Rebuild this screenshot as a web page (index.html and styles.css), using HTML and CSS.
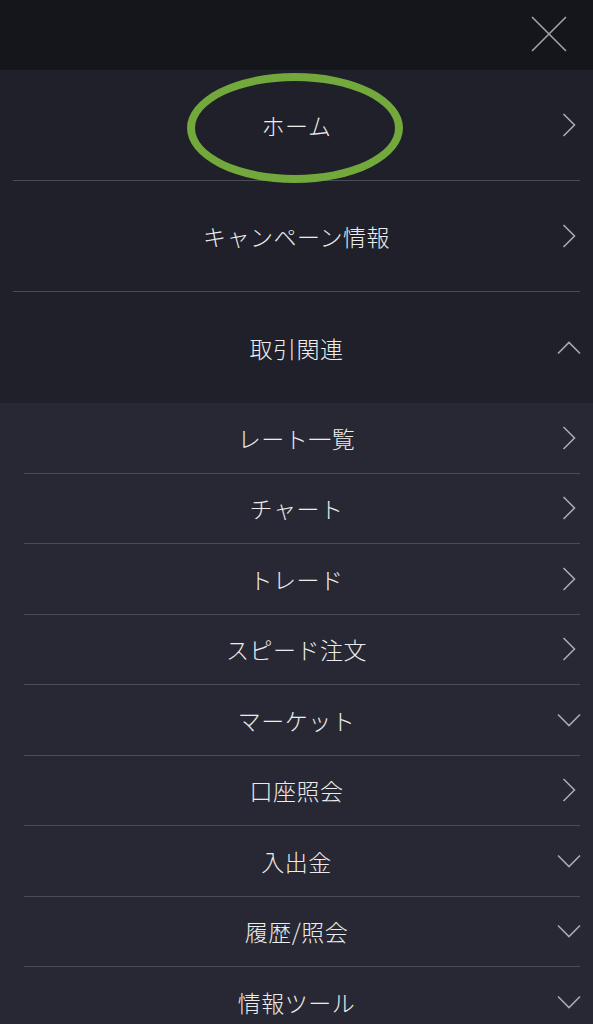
FILE: index.html
```html
<!DOCTYPE html>
<html lang="ja">
<head>
  <meta charset="UTF-8" />
  <meta name="viewport" content="width=device-width, initial-scale=1.0" />
  <title>メニュー</title>
  <link rel="stylesheet" href="styles.css">
</head>
<body>

  <!-- ヘッダー -->
  <header class="menu-header">
    <button class="close-btn" aria-label="閉じる">
      <svg width="36" height="36" viewBox="0 0 36 36"><path d="M1 1 L35 35 M35 1 L1 35" stroke="#a2a3a8" stroke-width="1.6" fill="none"/></svg>
    </button>
  </header>

  <!-- メインメニュー -->
  <nav class="main-menu">
    <a class="main-row" href="#">
      <span class="label">ホーム</span>
      <span class="icon"><svg width="14" height="24" viewBox="0 0 14 24"><path d="M1.5 1 L12.5 12 L1.5 23" class="chev"/></svg></span>
      <span class="mark"></span>
    </a>
    <hr class="line main-line">
    <a class="main-row" href="#">
      <span class="label">キャンペーン情報</span>
      <span class="icon"><svg width="14" height="24" viewBox="0 0 14 24"><path d="M1.5 1 L12.5 12 L1.5 23" class="chev"/></svg></span>
    </a>
    <hr class="line main-line">
    <a class="main-row tall" href="#">
      <span class="label">取引関連</span>
      <span class="icon"><svg width="24" height="14" viewBox="0 0 24 14"><path d="M1 12.5 L12 1.5 L23 12.5" class="chev"/></svg></span>
    </a>
  </nav>

  <!-- サブメニュー -->
  <nav class="sub-menu">
    <a class="sub-row" href="#"><span class="label">レート一覧</span><span class="icon"><svg width="14" height="24" viewBox="0 0 14 24"><path d="M1.5 1 L12.5 12 L1.5 23" class="chev"/></svg></span></a>
    <hr class="line sub-line">
    <a class="sub-row" href="#"><span class="label">チャート</span><span class="icon"><svg width="14" height="24" viewBox="0 0 14 24"><path d="M1.5 1 L12.5 12 L1.5 23" class="chev"/></svg></span></a>
    <hr class="line sub-line">
    <a class="sub-row" href="#"><span class="label">トレード</span><span class="icon"><svg width="14" height="24" viewBox="0 0 14 24"><path d="M1.5 1 L12.5 12 L1.5 23" class="chev"/></svg></span></a>
    <hr class="line sub-line">
    <a class="sub-row" href="#"><span class="label">スピード注文</span><span class="icon"><svg width="14" height="24" viewBox="0 0 14 24"><path d="M1.5 1 L12.5 12 L1.5 23" class="chev"/></svg></span></a>
    <hr class="line sub-line">
    <a class="sub-row" href="#"><span class="label">マーケット</span><span class="icon"><svg width="24" height="14" viewBox="0 0 24 14"><path d="M1 1.5 L12 12.5 L23 1.5" class="chev"/></svg></span></a>
    <hr class="line sub-line">
    <a class="sub-row" href="#"><span class="label">口座照会</span><span class="icon"><svg width="14" height="24" viewBox="0 0 14 24"><path d="M1.5 1 L12.5 12 L1.5 23" class="chev"/></svg></span></a>
    <hr class="line sub-line">
    <a class="sub-row" href="#"><span class="label">入出金</span><span class="icon"><svg width="24" height="14" viewBox="0 0 24 14"><path d="M1 1.5 L12 12.5 L23 1.5" class="chev"/></svg></span></a>
    <hr class="line sub-line">
    <a class="sub-row" href="#"><span class="label">履歴/照会</span><span class="icon"><svg width="24" height="14" viewBox="0 0 24 14"><path d="M1 1.5 L12 12.5 L23 1.5" class="chev"/></svg></span></a>
    <hr class="line sub-line">
    <a class="sub-row" href="#"><span class="label">情報ツール</span><span class="icon"><svg width="24" height="14" viewBox="0 0 24 14"><path d="M1 1.5 L12 12.5 L23 1.5" class="chev"/></svg></span></a>
  </nav>

</body>
</html>
```

FILE: styles.css
```css
body {
  margin: 0;
  font-family: 'Noto Sans CJK JP', 'Noto Sans', sans-serif;
  background-color: #272833;
  color: #ececec;
  overflow: hidden;
}
.menu-header {
  height: 70px;
  background-color: #15161b;
  display: flex;
  justify-content: flex-end;
  align-items: center;
  padding-right: 26px;
}
.close-btn {
  background: none;
  border: none;
  padding: 0;
  margin-top: -2px;
  display: flex;
}
.main-menu {
  background-color: #1f2029;
  display: flex;
  flex-direction: column;
  position: relative;
}
.sub-menu {
  background-color: #272833;
  display: flex;
  flex-direction: column;
}
.main-row, .sub-row {
  display: grid;
  grid-template-columns: 1fr auto 1fr;
  align-items: center;
  color: #ececec;
  text-decoration: none;
  font-size: 23px;
  font-weight: 300;
  letter-spacing: 0.5px;
  position: relative;
}
.main-row {
  height: 110px;
}
.main-row.tall {
  height: 111px;
}
.sub-row {
  height: 69.5px;
}
.label {
  grid-column: 2;
}
.icon {
  grid-column: 3;
  justify-self: end;
  display: flex;
  align-items: center;
  justify-content: center;
  width: 24px;
  margin-right: 12px;
}
.chev {
  fill: none;
  stroke: #a9aaaf;
  stroke-width: 1.6;
}
.line {
  border: none;
  height: 1px;
  margin: 0;
  background-color: #4b4d56;
}
.main-line {
  margin: 0 13px;
}
.sub-line {
  margin: 0 13px 0 24px;
}
/* 注目マーク */
.mark {
  position: absolute;
  left: 187px;
  top: 3px;
  width: 216px;
  height: 110px;
  box-sizing: border-box;
  border: 8px solid #73a83c;
  border-radius: 50%;
  z-index: 2;
}
```
